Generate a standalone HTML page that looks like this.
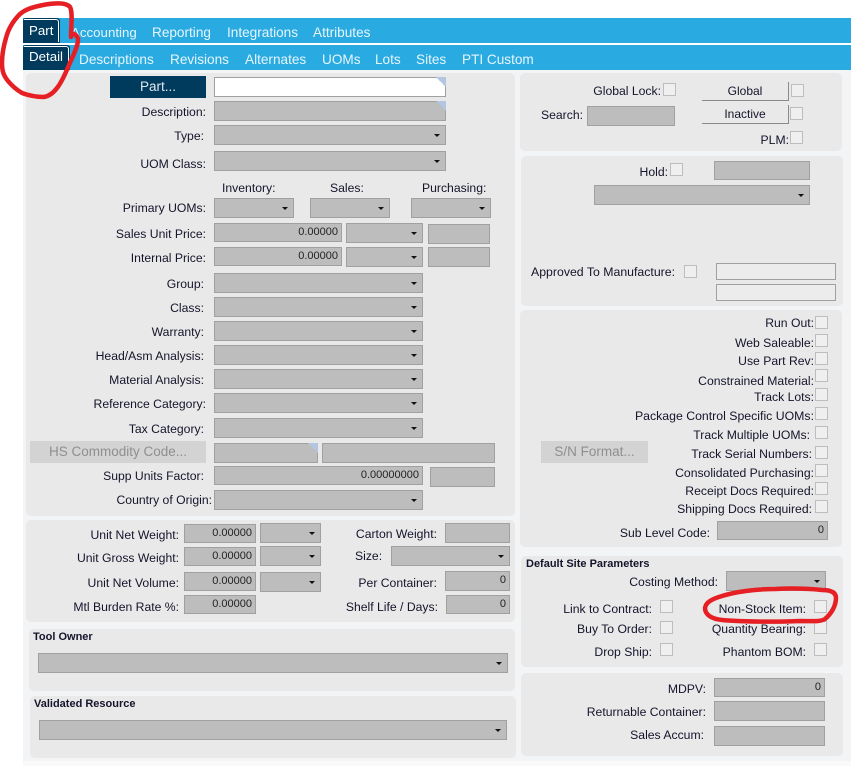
<!DOCTYPE html>
<html><head><meta charset="utf-8"><style>
html,body{margin:0;padding:0;background:#fff}
#a{position:relative;width:851px;height:766px;overflow:hidden;background:#fff;font:12.2px/14px "Liberation Sans",sans-serif;color:#14142b}
#a div{position:absolute;box-sizing:border-box}
.bg{background:#f3f4f6}
.bar{background:#29abe2}
.p{background:#e9e9e9;border-radius:5px}
.t{color:#e6f5fc;font-size:13.6px;line-height:16px;white-space:nowrap}
.tab{background:#003a5d;color:#fff;font-size:13.3px;line-height:16px;border:1px solid #003a5d;border-radius:3px 3px 0 0}
.tab i{position:absolute;left:0;right:0;top:0;bottom:0;border-top:1px solid #fff;border-right:1px solid #fff;border-radius:0 3px 0 0}
.l{white-space:nowrap;text-align:right}
.c{white-space:nowrap}
.f{background:#bdbdbd;border:1px solid #a0a0a0;text-align:right;padding:0 3px 0 0;line-height:16px;font-size:11px;color:#222}
.s{background:#bdbdbd;border:1px solid #a0a0a0}
.s:after{content:"";position:absolute;right:5px;top:8px;border:3px solid transparent;border-top:3.5px solid #111;border-bottom:0}
.k{width:13px;height:13px;background:#efefef;border:1px solid #bdbdbd}
.n{background:#ececec;border:1px solid #a0a0a0}
.b{font-weight:bold;font-size:11px;white-space:nowrap}
.h{background:#d3d3d3;color:#8f8f8f;text-align:center;font-size:13.5px;line-height:22px}
.g{border-right:1px solid #8a8a8a;border-bottom:1px solid #8a8a8a;text-align:center;line-height:19px;font-size:12px}
</style></head><body><div id="a">
<div class="bg" style="left:23px;top:70px;width:828px;height:691px"></div>
<div style="left:23px;top:761px;width:828px;height:5px;background:#f9f9fa"></div>
<div class="bar" style="left:23px;top:18px;width:828px;height:25px"></div>
<div class="bar" style="left:23px;top:45px;width:828px;height:25px"></div>

<div class="tab" style="left:23px;top:18px;width:37px;height:25px;padding:4px 0 0 5px">Part<i></i></div>
<div class="tab" style="left:23px;top:45px;width:47px;height:25px;padding:3px 0 0 5px">Detail<i></i></div>
<div class="t" style="left:71px;top:25px;font-size:13.3px">Accounting</div>
<div class="t" style="left:152px;top:25px">Reporting</div>
<div class="t" style="left:227px;top:25px">Integrations</div>
<div class="t" style="left:313px;top:25px">Attributes</div>
<div class="t" style="left:79px;top:52px">Descriptions</div>
<div class="t" style="left:170px;top:52px">Revisions</div>
<div class="t" style="left:245px;top:52px">Alternates</div>
<div class="t" style="left:322px;top:52px">UOMs</div>
<div class="t" style="left:375px;top:52px">Lots</div>
<div class="t" style="left:416px;top:52px">Sites</div>
<div class="t" style="left:462px;top:52px">PTI Custom</div>

<div class="p" style="left:26px;top:73px;width:489px;height:443px"></div>
<div class="p" style="left:26px;top:520px;width:489px;height:102px"></div>
<div class="p" style="left:29px;top:629px;width:486px;height:62px"></div>
<div class="p" style="left:30px;top:696px;width:486px;height:62px"></div>
<div class="p" style="left:520px;top:73px;width:322px;height:78px"></div>
<div class="p" style="left:521px;top:156px;width:322px;height:150px"></div>
<div class="p" style="left:520px;top:310px;width:322px;height:237px"></div>
<div class="p" style="left:521px;top:556px;width:322px;height:111px"></div>
<div class="p" style="left:521px;top:673px;width:322px;height:83px"></div>

<div style="left:110px;top:76px;width:96px;height:22px;background:#003a5d;color:#dfe8ee;text-align:center;font-size:13.5px;line-height:22px">Part...</div>
<div style="left:214px;top:77px;width:232px;height:20px;background:#fff;border:1px solid #a0a0a0"></div>
<div style="left:436px;top:77px;width:10px;height:10px;background:linear-gradient(45deg,transparent 50%,#b3c6e0 50%)"></div>
<div class="l" style="right:645px;top:105px">Description:</div>
<div class="f" style="left:214px;top:101px;width:232px;height:20px"></div>
<div style="left:436px;top:101px;width:10px;height:10px;background:linear-gradient(45deg,transparent 50%,#b3c6e0 50%)"></div>
<div class="l" style="right:647px;top:129px">Type:</div>
<div class="s" style="left:214px;top:125px;width:232px;height:20px"></div>
<div class="l" style="right:645px;top:157px">UOM Class:</div>
<div class="s" style="left:214px;top:151px;width:232px;height:20px"></div>

<div class="c" style="left:222px;top:181px">Inventory:</div>
<div class="c" style="left:330px;top:181px">Sales:</div>
<div class="c" style="left:422px;top:181px">Purchasing:</div>
<div class="l" style="right:645px;top:201px">Primary UOMs:</div>
<div class="s" style="left:214px;top:198px;width:80px;height:20px"></div>
<div class="s" style="left:310px;top:198px;width:80px;height:20px"></div>
<div class="s" style="left:411px;top:198px;width:80px;height:20px"></div>

<div class="l" style="right:645px;top:227px">Sales Unit Price:</div>
<div class="f" style="left:214px;top:223px;width:128px;height:19px">0.00000</div>
<div class="s" style="left:346px;top:223px;width:77px;height:20px"></div>
<div class="f" style="left:428px;top:224px;width:62px;height:20px"></div>
<div class="l" style="right:645px;top:251px">Internal Price:</div>
<div class="f" style="left:214px;top:247px;width:128px;height:19px">0.00000</div>
<div class="s" style="left:346px;top:247px;width:77px;height:20px"></div>
<div class="f" style="left:428px;top:247px;width:62px;height:20px"></div>

<div class="l" style="right:647px;top:277px">Group:</div>
<div class="s" style="left:214px;top:273px;width:209px;height:20px"></div>
<div class="l" style="right:647px;top:301px">Class:</div>
<div class="s" style="left:214px;top:297px;width:209px;height:20px"></div>
<div class="l" style="right:647px;top:325px">Warranty:</div>
<div class="s" style="left:214px;top:321px;width:209px;height:20px"></div>
<div class="l" style="right:647px;top:349px">Head/Asm Analysis:</div>
<div class="s" style="left:214px;top:345px;width:209px;height:20px"></div>
<div class="l" style="right:647px;top:373px">Material Analysis:</div>
<div class="s" style="left:214px;top:369px;width:209px;height:20px"></div>
<div class="l" style="right:645px;top:397px">Reference Category:</div>
<div class="s" style="left:214px;top:393px;width:209px;height:20px"></div>
<div class="l" style="right:647px;top:422px">Tax Category:</div>
<div class="s" style="left:214px;top:418px;width:209px;height:20px"></div>

<div class="h" style="left:30px;top:441px;width:176px;height:22px">HS Commodity Code...</div>
<div class="f" style="left:214px;top:443px;width:104px;height:20px"></div>
<div style="left:308px;top:443px;width:10px;height:10px;background:linear-gradient(45deg,transparent 50%,#b3c6e0 50%)"></div>
<div class="f" style="left:322px;top:443px;width:173px;height:20px"></div>
<div class="l" style="right:647px;top:469px">Supp Units Factor:</div>
<div class="f" style="left:214px;top:466px;width:209px;height:19px">0.00000000</div>
<div class="f" style="left:430px;top:467px;width:65px;height:20px"></div>
<div class="l" style="right:639px;top:493px">Country of Origin:</div>
<div class="s" style="left:214px;top:490px;width:209px;height:20px"></div>

<div class="l" style="right:672px;top:528px">Unit Net Weight:</div>
<div class="f" style="left:184px;top:524px;width:72px;height:19px">0.00000</div>
<div class="s" style="left:260px;top:523px;width:61px;height:20px"></div>
<div class="l" style="right:672px;top:551px">Unit Gross Weight:</div>
<div class="f" style="left:184px;top:547px;width:72px;height:19px">0.00000</div>
<div class="s" style="left:260px;top:546px;width:61px;height:20px"></div>
<div class="l" style="right:672px;top:576px">Unit Net Volume:</div>
<div class="f" style="left:184px;top:572px;width:72px;height:19px">0.00000</div>
<div class="s" style="left:260px;top:572px;width:61px;height:20px"></div>
<div class="l" style="right:672px;top:600px">Mtl Burden Rate %:</div>
<div class="f" style="left:184px;top:595px;width:72px;height:19px">0.00000</div>

<div class="l" style="right:414px;top:527px">Carton Weight:</div>
<div class="f" style="left:445px;top:523px;width:65px;height:20px"></div>
<div class="c" style="left:355px;top:549px">Size:</div>
<div class="s" style="left:391px;top:546px;width:119px;height:20px"></div>
<div class="l" style="right:414px;top:576px">Per Container:</div>
<div class="f" style="left:445px;top:571px;width:65px;height:20px">0</div>
<div class="l" style="right:413px;top:600px">Shelf Life / Days:</div>
<div class="f" style="left:446px;top:595px;width:64px;height:19px">0</div>

<div class="b" style="left:33px;top:630px">Tool Owner</div>
<div class="s" style="left:38px;top:653px;width:470px;height:20px"></div>
<div class="b" style="left:34px;top:697px">Validated Resource</div>
<div class="s" style="left:39px;top:720px;width:468px;height:20px"></div>

<div class="l" style="right:190px;top:84px">Global Lock:</div>
<div class="k" style="left:663px;top:83px"></div>
<div class="g" style="left:702px;top:82px;width:87px;height:19px">Global</div>
<div class="k" style="left:791px;top:84px"></div>
<div class="l" style="right:268px;top:108px">Search:</div>
<div class="f" style="left:587px;top:106px;width:88px;height:20px"></div>
<div class="g" style="left:702px;top:105px;width:87px;height:19px">Inactive</div>
<div class="k" style="left:790px;top:107px"></div>
<div class="l" style="right:62px;top:133px">PLM:</div>
<div class="k" style="left:790px;top:131px"></div>

<div class="l" style="right:183px;top:165px">Hold:</div>
<div class="k" style="left:670px;top:163px"></div>
<div class="f" style="left:714px;top:161px;width:96px;height:19px"></div>
<div class="s" style="left:594px;top:185px;width:216px;height:20px"></div>
<div class="c" style="left:531px;top:265px;font-size:12.3px">Approved To Manufacture:</div>
<div class="k" style="left:684px;top:265px"></div>
<div class="n" style="left:716px;top:263px;width:120px;height:17px"></div>
<div class="n" style="left:716px;top:284px;width:120px;height:17px"></div>

<div class="l" style="right:37px;top:316px">Run Out:</div><div class="k" style="left:815px;top:316px"></div>
<div class="l" style="right:37px;top:336px">Web Saleable:</div><div class="k" style="left:815px;top:334px"></div>
<div class="l" style="right:37px;top:354px">Use Part Rev:</div><div class="k" style="left:815px;top:352px"></div>
<div class="l" style="right:37px;top:374px">Constrained Material:</div><div class="k" style="left:815px;top:369px"></div>
<div class="l" style="right:37px;top:390px">Track Lots:</div><div class="k" style="left:815px;top:388px"></div>
<div class="l" style="right:37px;top:409px;font-size:12.3px">Package Control Specific UOMs:</div><div class="k" style="left:815px;top:407px"></div>
<div class="l" style="right:41px;top:428px">Track Multiple UOMs:</div><div class="k" style="left:815px;top:426px"></div>
<div class="l" style="right:39px;top:447px">Track Serial Numbers:</div><div class="k" style="left:815px;top:446px"></div>
<div class="l" style="right:37px;top:466px">Consolidated Purchasing:</div><div class="k" style="left:815px;top:464px"></div>
<div class="l" style="right:37px;top:484px">Receipt Docs Required:</div><div class="k" style="left:815px;top:482px"></div>
<div class="l" style="right:39px;top:502px">Shipping Docs Required:</div><div class="k" style="left:815px;top:500px"></div>
<div class="h" style="left:541px;top:441px;width:107px;height:22px">S/N Format...</div>
<div class="l" style="right:141px;top:526px">Sub Level Code:</div>
<div class="f" style="left:717px;top:521px;width:111px;height:19px">0</div>

<div class="b" style="left:526px;top:557px">Default Site Parameters</div>
<div class="l" style="right:133px;top:575px">Costing Method:</div>
<div class="s" style="left:726px;top:571px;width:100px;height:20px"></div>
<div class="l" style="right:199px;top:602px">Link to Contract:</div><div class="k" style="left:660px;top:600px"></div>
<div class="l" style="right:199px;top:622px">Buy To Order:</div><div class="k" style="left:660px;top:621px"></div>
<div class="l" style="right:199px;top:645px">Drop Ship:</div><div class="k" style="left:660px;top:643px"></div>
<div class="l" style="right:45px;top:602px">Non-Stock Item:</div><div class="k" style="left:814px;top:600px"></div>
<div class="l" style="right:45px;top:622px">Quantity Bearing:</div><div class="k" style="left:814px;top:621px"></div>
<div class="l" style="right:45px;top:645px">Phantom BOM:</div><div class="k" style="left:814px;top:643px"></div>

<div class="l" style="right:145px;top:682px">MDPV:</div>
<div class="f" style="left:714px;top:678px;width:111px;height:19px">0</div>
<div class="l" style="right:145px;top:705px">Returnable Container:</div>
<div class="f" style="left:714px;top:701px;width:111px;height:20px"></div>
<div class="l" style="right:147px;top:728px">Sales Accum:</div>
<div class="f" style="left:714px;top:726px;width:111px;height:20px"></div>

<svg width="851" height="766" style="position:absolute;left:0;top:0" fill="none" stroke="#e51f23" stroke-width="4.5" stroke-linecap="round" stroke-linejoin="round">
<path d="M71 37C71 26 73 12 70 7C66 2 54 3 43 5C33 7 26 9 20 14C12 22 8 30 6 38C3 48 2 56 2 63C2 72 4 76 8 81C13 87 17 90 22 93C30 96 38 97 44 97C50 96 54 92 57 88C62 82 66 72 69 65C73 56 78 46 78 40C78 36 75 34 71 33"/>
<path d="M822 590C830 590 836 592 836 598C836 606 831 614 825 619C820 622 812 621 800 621C780 622 745 622 722 620C712 619 705 615 705 608C706 602 712 599 722 596C735 592 755 589 775 589C795 588 812 589 822 590"/>
</svg>
</div></body></html>
